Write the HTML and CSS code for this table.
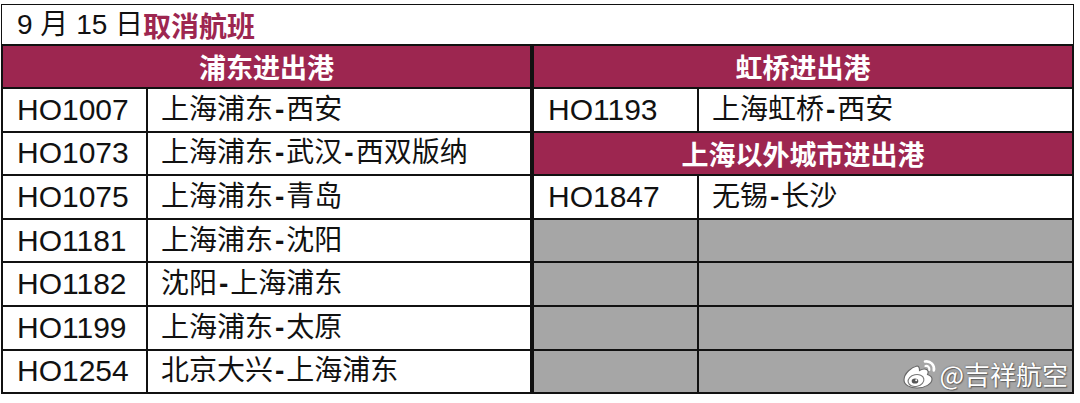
FILE: index.html
```html
<!DOCTYPE html>
<html lang="zh-CN">
<head>
<meta charset="utf-8">
<title>9月15日取消航班</title>
<link rel="stylesheet" href="styles.css">
</head>
<body>
<div class="sheet">
  <div class="title"><span class="date">9 月 15 日</span><span class="hl">取消航班</span></div>
  <div class="tables">
    <div class="grid left">
      <div class="head span">浦东进出港</div>
      <div class="cell code">HO1007</div><div class="cell route">上海浦东<span class="dash">-</span>西安</div>
      <div class="cell code">HO1073</div><div class="cell route">上海浦东<span class="dash">-</span>武汉<span class="dash">-</span>西双版纳</div>
      <div class="cell code">HO1075</div><div class="cell route">上海浦东<span class="dash">-</span>青岛</div>
      <div class="cell code">HO1181</div><div class="cell route">上海浦东<span class="dash">-</span>沈阳</div>
      <div class="cell code">HO1182</div><div class="cell route">沈阳<span class="dash">-</span>上海浦东</div>
      <div class="cell code">HO1199</div><div class="cell route">上海浦东<span class="dash">-</span>太原</div>
      <div class="cell code">HO1254</div><div class="cell route">北京大兴<span class="dash">-</span>上海浦东</div>
    </div>
    <div class="grid right">
      <div class="head span">虹桥进出港</div>
      <div class="cell code">HO1193</div><div class="cell route">上海虹桥<span class="dash">-</span>西安</div>
      <div class="head span">上海以外城市进出港</div>
      <div class="cell code">HO1847</div><div class="cell route">无锡<span class="dash">-</span>长沙</div>
      <div class="cell gray"></div><div class="cell gray"></div>
      <div class="cell gray"></div><div class="cell gray"></div>
      <div class="cell gray"></div><div class="cell gray"></div>
      <div class="cell gray"></div><div class="cell gray"></div>
    </div>
  </div>
  <div class="watermark">
    <svg class="weibo" width="36" height="32" viewBox="0 0 36 32">
      <path d="M15 8c-5 1-13 7-13 14 0 5 6 8 13 8 8 0 15-4 15-9 0-3-3-4-4.5-4.5 1-2 1-4-1-5-2-1-5 0-7 1 0-3-1.5-4.5-2.5-4.5z" fill="#fff" stroke="#666" stroke-width="1.1"/>
      <ellipse cx="14" cy="22.5" rx="8" ry="5.8" fill="#fff" stroke="#777" stroke-width="1.1" transform="rotate(-12 14 22.5)"/>
      <ellipse cx="13" cy="23" rx="3.3" ry="2.6" fill="#555"/>
      <circle cx="14.2" cy="22.2" r="1" fill="#fff"/>
      <path d="M23 3.5c5.5-1 10 3.5 8.8 9" fill="none" stroke="#fff" stroke-width="2.6" stroke-linecap="round"/>
      <path d="M23.5 8c2.2-0.4 4.2 1.3 3.8 3.8" fill="none" stroke="#fff" stroke-width="2.2" stroke-linecap="round"/>
    </svg>
    <span class="wm-text">@吉祥航空</span>
  </div>
</div>
</body>
</html>
```

FILE: styles.css
```css
html, body {
  margin: 0;
  padding: 0;
  background: #fff;
}
body {
  font-family: "Liberation Sans", "Noto Sans CJK SC", sans-serif;
  color: #111;
}
.sheet {
  position: relative;
  width: 1073px;
  margin: 4px 0 0 1px;
}
.title {
  height: 39px;
  border: 1.5px solid #111;
  border-bottom: 2.5px solid #111;
  display: flex;
  align-items: center;
  padding-left: 15px;
  font-size: 28px;
  line-height: 1;
}
.title .date {
  font-family: "Liberation Sans", "Noto Sans CJK SC", sans-serif;
}
.title .hl {
  color: #9d2650;
  font-weight: 700;
  font-family: "Noto Sans CJK SC", sans-serif;
}
.tables {
  display: flex;
}
.grid {
  display: grid;
  grid-template-rows: 41px repeat(7, 41.6px);
  gap: 2px;
  background: #111;
  border-bottom: 2.5px solid #111;
}
.left {
  width: 527px;
  grid-template-columns: 143px 1fr;
  border-left: 2.5px solid #111;
  border-right: 2px solid #111;
}
.right {
  width: 538px;
  grid-template-columns: 163px 1fr;
  border-left: 2px solid #111;
  border-right: 2.5px solid #111;
}
.head {
  background: #9d2650;
  color: #fff;
  font-family: "Noto Sans CJK SC", sans-serif;
  font-weight: 700;
  font-size: 27px;
  display: flex;
  align-items: center;
  justify-content: center;
}
.span {
  grid-column: 1 / -1;
}
.cell {
  background: #fff;
  display: flex;
  align-items: center;
  font-size: 28px;
  line-height: 1;
  white-space: pre;
}
.code {
  padding-left: 14px;
  font-family: "Liberation Sans", sans-serif;
  font-size: 30px;
}
.route {
  padding-left: 13px;
  font-family: "Liberation Sans", "Noto Sans CJK SC", sans-serif;
  font-size: 28px;
}
.dash {
  margin: 0 2px;
  font-weight: 700;
}
.gray {
  background: #a6a6a6;
}
.watermark {
  position: absolute;
  right: 6px;
  bottom: 4px;
  display: flex;
  align-items: center;
  gap: 1px;
}
.wm-text {
  color: #fff;
  font-family: "Noto Sans CJK SC", sans-serif;
  font-size: 26px;
  line-height: 1;
  text-shadow: 0 0 2px #555, 1px 1px 1px #666;
}
```
